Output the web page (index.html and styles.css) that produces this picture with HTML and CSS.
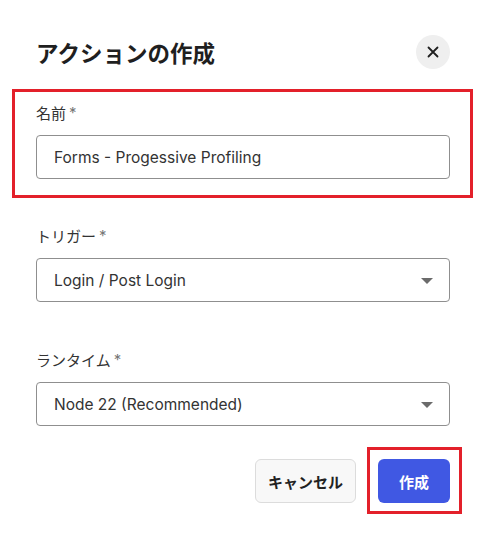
FILE: index.html
```html
<!DOCTYPE html>
<html lang="ja">
<head>
<meta charset="utf-8">
<link rel="stylesheet" href="styles.css">
</head>
<body>
<div class="dialog">
  <div class="header">
    <h1 class="title">アクションの作成</h1>
    <button class="close" aria-label="close">
      <svg width="12" height="12" viewBox="0 0 12 12"><path d="M1.5 1.5 L10.5 10.5 M10.5 1.5 L1.5 10.5" stroke="#1f1f1f" stroke-width="1.8" stroke-linecap="round"/></svg>
    </button>
  </div>
  <div class="field first">
    <div class="label">名前<span class="req">*</span></div>
    <div class="input">Forms - Progessive Profiling</div>
  </div>
  <div class="field">
    <div class="label">トリガー<span class="req">*</span></div>
    <div class="input select"><span>Login / Post Login</span><span class="caret"></span></div>
  </div>
  <div class="field last">
    <div class="label">ランタイム<span class="req">*</span></div>
    <div class="input select"><span>Node 22 (Recommended)</span><span class="caret"></span></div>
  </div>
  <div class="actions">
    <button class="btn cancel">キャンセル</button>
    <button class="btn create">作成</button>
  </div>
  <div class="mark mark-name"></div>
  <div class="mark mark-create"></div>
</div>
</body>
</html>
```
FILE: styles.css
```css
html, body {
  margin: 0;
  padding: 0;
  background: #ffffff;
}
body {
  font-family: Inter, "Noto Sans CJK JP", sans-serif;
  color: #1f1f1f;
  min-height: 533px;
}
.dialog {
  position: relative;
  width: 414px;
  padding: 35px 35px 30px 36px;
}
.header {
  display: flex;
  align-items: center;
  justify-content: space-between;
  height: 34px;
}
.title {
  margin: 0;
  font-size: 22.5px;
  font-weight: 600;
  line-height: 34px;
  height: 34px;
  color: #1f1f1f;
  font-family: "Noto Sans CJK JP", sans-serif;
}
.close {
  width: 34px;
  height: 34px;
  border-radius: 50%;
  border: none;
  background: #efefef;
  display: flex;
  align-items: center;
  justify-content: center;
  padding: 0;
}
.field {
  margin-top: 46px;
}
.field.first {
  margin-top: 33px;
}
.field.last {
  margin-top: 47px;
}
.label {
  display: flex;
  align-items: center;
  height: 20px;
  font-family: "Noto Sans CJK JP", sans-serif;
  font-size: 15px;
  color: #333333;
  margin-bottom: 13px;
}
.req {
  color: #777777;
  margin-left: 3px;
  font-family: Inter, sans-serif;
}
.input {
  box-sizing: border-box;
  height: 44px;
  border: 1px solid #8f8f8f;
  border-radius: 4px;
  padding: 0 17px;
  display: flex;
  align-items: center;
  font-size: 15.5px;
  color: #333333;
}
.select {
  justify-content: space-between;
  padding-right: 16px;
}
.caret {
  width: 0;
  height: 0;
  border-left: 6px solid transparent;
  border-right: 6px solid transparent;
  border-top: 6px solid #6b6b6b;
  margin-top: 2px;
}
.actions {
  display: flex;
  justify-content: flex-end;
  gap: 22px;
  margin-top: 33px;
}
.btn {
  height: 44px;
  border-radius: 6px;
  font-family: "Noto Sans CJK JP", sans-serif;
  font-size: 15px;
  font-weight: 700;
  padding: 0;
  cursor: pointer;
}
.cancel {
  width: 101px;
  background: #f8f8f8;
  border: 1px solid #dcdcdc;
  color: #222222;
}
.create {
  width: 72px;
  background: #4058e3;
  border: none;
  color: #ffffff;
}
.mark {
  position: absolute;
  border: 3px solid #e3202a;
  box-sizing: border-box;
}
.mark-name {
  left: 12px;
  top: 89px;
  width: 461px;
  height: 109px;
}
.mark-create {
  left: 367px;
  top: 447px;
  width: 95px;
  height: 67px;
}
```
